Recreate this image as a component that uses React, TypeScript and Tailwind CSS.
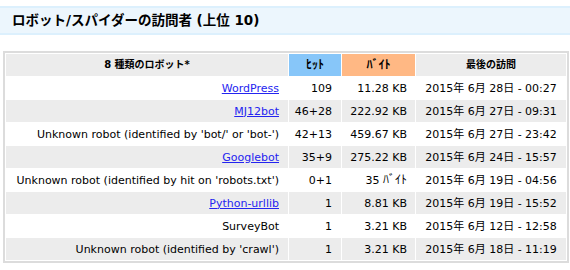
const font = { fontFamily: '"DejaVu Sans", Verdana, "Noto Sans CJK JP", sans-serif' };

type Row = {
  name: string;
  link: boolean;
  hits: string;
  bytes: string;
  last: string;
};

const rows: Row[] = [
  { name: "WordPress", link: true, hits: "109", bytes: "11.28 KB", last: "2015年 6月 28日 - 00:27" },
  { name: "MJ12bot", link: true, hits: "46+28", bytes: "222.92 KB", last: "2015年 6月 27日 - 09:31" },
  { name: "Unknown robot (identified by 'bot/' or 'bot-')", link: false, hits: "42+13", bytes: "459.67 KB", last: "2015年 6月 27日 - 23:42" },
  { name: "Googlebot", link: true, hits: "35+9", bytes: "275.22 KB", last: "2015年 6月 24日 - 15:57" },
  { name: "Unknown robot (identified by hit on 'robots.txt')", link: false, hits: "0+1", bytes: "35", last: "2015年 6月 19日 - 04:56" },
  { name: "Python-urllib", link: true, hits: "1", bytes: "8.81 KB", last: "2015年 6月 19日 - 15:52" },
  { name: "SurveyBot", link: false, hits: "1", bytes: "3.21 KB", last: "2015年 6月 12日 - 12:58" },
  { name: "Unknown robot (identified by 'crawl')", link: false, hits: "1", bytes: "3.21 KB", last: "2015年 6月 18日 - 11:19" },
];

export default function App() {
  return (
    <div className="w-[570px] h-[270px] bg-white text-black overflow-hidden pt-[6px]" style={font}>
      {/* Section title */}
      <div className="h-[29px] border-y-2 border-[#dcf0fd] bg-[#ecf6fd] flex items-center pl-[12px]">
        <span className="text-[13.5px] font-bold leading-none">ロボット/スパイダーの訪問者 (上位 10)</span>
      </div>

      {/* Robots table */}
      <table className="ml-[3px] mt-[16px] w-[566px] border-2 border-[#dcdcdc] border-separate border-spacing-[1px] text-[11px] leading-none">
        <thead>
          <tr className="h-[22px] text-[10px] font-bold">
            <th className="bg-[#ececec] text-center font-bold">8 種類のロボット*</th>
            <th className="w-[52px] bg-[#87c6f9] text-center font-bold text-[12px]">ﾋｯﾄ</th>
            <th className="w-[73px] bg-[#ffb884] text-center font-bold text-[12px]">ﾊﾞｲﾄ</th>
            <th className="w-[150px] bg-[#ececec] text-center font-bold">最後の訪問</th>
          </tr>
        </thead>
        <tbody>
          {rows.map((r, i) => (
            <tr key={i} className={`h-[22px] ${i % 2 === 1 ? "bg-[#ececec]" : "bg-white"}`}>
              <td className="text-right pr-[9px]">
                {r.link ? (
                  <a href="#" className="text-[#2424f0] underline">{r.name}</a>
                ) : (
                  r.name
                )}
              </td>
              <td className="text-right pr-[9px]">{r.hits}</td>
              <td className="text-right pr-[8px]">
                {r.bytes === "35" ? (
                  <>
                    35 <span className="text-[12px]">ﾊﾞｲﾄ</span>
                  </>
                ) : (
                  r.bytes
                )}
              </td>
              <td className="text-center">{r.last}</td>
            </tr>
          ))}
        </tbody>
      </table>
    </div>
  );
}
